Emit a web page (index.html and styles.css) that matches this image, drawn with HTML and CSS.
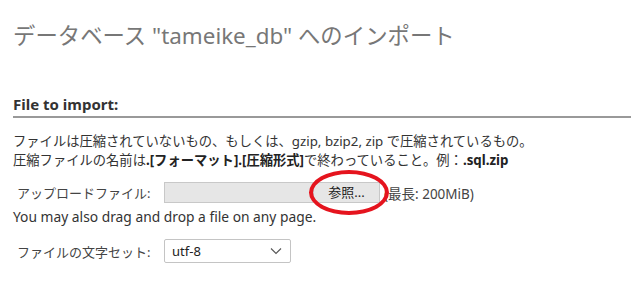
FILE: index.html
```html
<!DOCTYPE html>
<html lang="ja">

<head>
    <meta http-equiv="Content-Type" content="text/html;charset=utf-8">
    <title>インポート</title>
    <link rel="stylesheet" href="styles.css">
</head>

<body>
    <div class="page">
        <h2 class="pageTitle">データベース "tameike_db" へのインポート</h2>

        <div class="importBlock">
            <h3 class="blockTitle">File to import:</h3>
            <p class="note">ファイルは圧縮されていないもの、もしくは、gzip, bzip2, zip で圧縮されているもの。<br>
                圧縮ファイルの名前は<b>.[フォーマット].[圧縮形式]</b>で終わっていること。例：<b>.sql.zip</b></p>

            <!-- アップロード -->
            <div class="formRow uploadRow">
                <label class="rowLabel">アップロードファイル:</label>
                <div class="fileBox">
                    <span class="fileName"></span>
                    <span class="browseBtn">参照...</span>
                    <!-- 赤い丸印 -->
                    <span class="mark"></span>
                </div>
                <span class="maxSize">(最長: 200MiB)</span>
            </div>
            <p class="dragNote">You may also drag and drop a file on any page.</p>

            <!-- 文字セット -->
            <div class="formRow charsetRow">
                <label class="rowLabel">ファイルの文字セット:</label>
                <div class="selectBox">
                    <span>utf-8</span>
                    <svg class="chevron" width="12" height="8" viewBox="0 0 12 8">
                        <path d="M1 1.5 L6 6.5 L11 1.5" fill="none" stroke="#555" stroke-width="1.1" />
                    </svg>
                </div>
            </div>
        </div>
    </div>
</body>

</html>
```
FILE: styles.css
```css
* {
    margin: 0;
    padding: 0;
    box-sizing: border-box;
}

html,
body {
    font-family: "Noto Sans", "Noto Sans CJK JP", sans-serif;
    font-size: 13px;
    color: #333;
    background: #fff;
}

.page {
    padding: 19px 0 0 13px;
}

.pageTitle {
    font-size: 22.4px;
    font-weight: normal;
    color: #777;
    line-height: 34px;
    height: 75px;
}

.blockTitle {
    font-size: 15px;
    font-weight: bold;
    color: #333;
    line-height: 20px;
    padding-bottom: 2px;
    border-bottom: 2px solid #999;
}

.note {
    margin-top: 14px;
    line-height: 19px;
    font-size: 13.3px;
}

.note b {
    color: #222;
}

.formRow {
    display: flex;
    align-items: center;
}

.uploadRow {
    margin-top: 12px;
}

.rowLabel {
    width: 151px;
    padding-left: 4px;
    color: #444;
}

.fileBox {
    position: relative;
    display: flex;
    width: 216px;
    height: 21px;
    background: #e6e6e6;
    border: 1px solid #c8c8c8;
}

.fileName {
    flex: 1;
}

.browseBtn {
    width: 66px;
    border-left: 1px solid #c8c8c8;
    text-align: center;
    line-height: 19px;
    color: #222;
}

.mark {
    position: absolute;
    left: 144px;
    top: -13px;
    width: 80px;
    height: 45px;
    border: 4px solid #e5141e;
    border-radius: 50%;
}

.maxSize {
    margin-left: 4px;
    color: #444;
    font-size: 13.5px;
}

.dragNote {
    margin-top: 5px;
    line-height: 18px;
    font-size: 13.8px;
}

.charsetRow {
    margin-top: 13px;
}

.selectBox {
    display: flex;
    align-items: center;
    justify-content: space-between;
    width: 127px;
    height: 24px;
    padding: 0 8px 0 7px;
    border: 1px solid #c4c4c4;
    border-radius: 2px;
    color: #222;
}
```
